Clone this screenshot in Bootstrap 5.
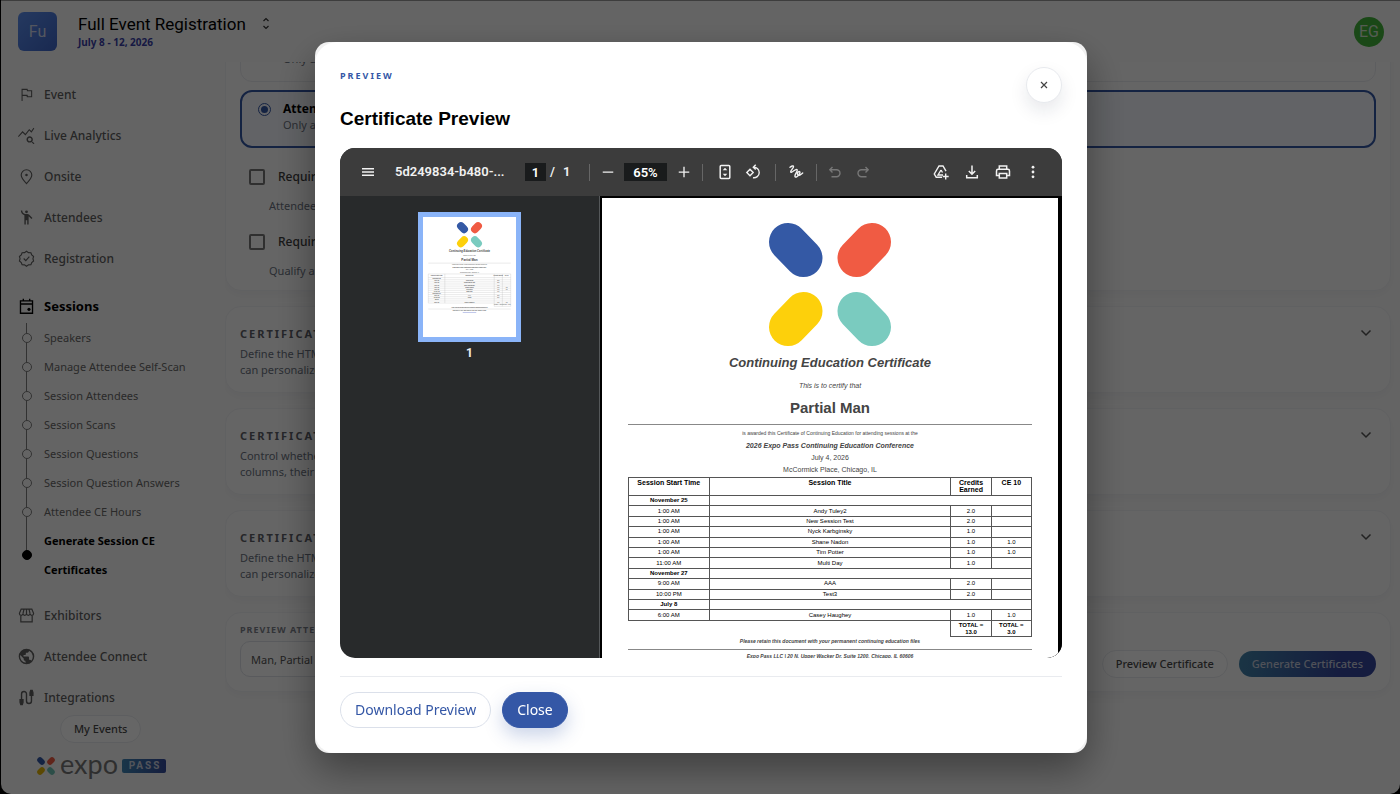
<!DOCTYPE html>
<html lang="en">
<head>
<meta charset="utf-8">
<meta name="viewport" content="width=device-width, initial-scale=1">
<title>Expo Pass - Generate Session CE Certificates</title>
<link href="https://cdn.jsdelivr.net/npm/bootstrap@5.3.0/dist/css/bootstrap.min.css" rel="stylesheet">
<style>
  :root { --navy: #3457a6; --line: #e9ebef; --muted-ink: #6b7280; }
  html, body { height: 100%; }
  body { background: #000; font-family: "Noto Sans", "Open Sans", sans-serif; font-size: 12px; line-height: 16px; color: #000; overflow: hidden; }
  button, input, select { font-family: inherit; }
  svg { display: block; flex: none; }
  .app-shell { height: 100vh; margin-left: 1px; background: #fbfbfb; border-top: 1px solid #999; border-radius: 0 0 10px 10px; overflow: hidden; }

  .app-header { height: 61px; padding: 0 16px 0 17px; }
  .event-tile { width: 39px; height: 39px; border-radius: 6px; background: linear-gradient(135deg, #5c8ff0, #3f66c8); color: #d0d8ee; font: 16px/39px Roboto, sans-serif; margin-right: 21px; }
  .event-name { font: 17px/20px Roboto, sans-serif; }
  .event-dates { font-size: 10px; line-height: 16px; font-weight: 700; color: #3a3fa8; }
  .avatar { width: 30px; height: 30px; border-radius: 50%; background: #43b53a; color: #d3e6d0; font: 16px/30px Roboto, sans-serif; border: 0; padding: 0; }

  .side { width: 224px; flex: none; }
  .side-nav { padding: 12px 0 0 17px; min-height: 0; flex: 1; overflow: hidden; }
  .side-link { height: 41px; gap: 9px; color: #5f5f5f; font-weight: 500; text-decoration: none; }
  .side-link.current { height: 44px; padding-top: 10px; color: #000; font-weight: 700; font-size: 13px; }
  .side-link svg { width: 17px; height: 17px; fill: currentColor; }
  .tree { margin: 0 0 11px; }
  .tree a { color: #696969; text-decoration: none; font-size: 11px; line-height: 29px; }
  .tree li { display: flex; gap: 9px; }
  .tree .rail { width: 17px; display: flex; align-items: center; justify-content: center; background: linear-gradient(#7d7d7d, #7d7d7d) center top / 1px 100% no-repeat; }
  .tree .rail::before { content: ""; width: 10px; height: 10px; border: 1px solid #7d7d7d; border-radius: 50%; background: #fbfbfb; }
  .tree .active .rail { background-size: 1px 50%; }
  .tree .active .rail::before { background: #000; border-color: #000; }
  .tree .active a { color: #000; font-weight: 700; width: 130px; }
  .side-foot { height: 79px; padding-left: 35px; }
  .pill { border: 1px solid var(--line); border-radius: 18px; background: #fff; color: #4a4a4a; font-size: 11px; font-weight: 500; line-height: 16px; padding: 5px 13px; }
  .brand-row { height: 22px; margin-top: 12px; }
  .brand-word { font: 27px/20px Lato, sans-serif; color: #777; padding-bottom: 4px; }
  .brand-pass { width: 44px; height: 14px; border-radius: 2px; background: linear-gradient(90deg, #3f86b5, #344a9c); color: #ccd3e2; font: 700 10px/14px Roboto, sans-serif; letter-spacing: 2px; padding-left: 2px; }

  .work { flex: 1; min-width: 0; overflow: hidden; padding: 0 9px 102px 0; gap: 15px; }
  .panel { flex: none; background: #fdfdfd; border: 1px solid #f1f2f5; border-radius: 16px; padding: 0 14px; box-shadow: 0 4px 12px rgba(20, 30, 60, .04); }
  .choice { display: block; border: 1px solid var(--line); border-radius: 12px; padding: 9px 18px 0; height: 58px; margin-bottom: 8px; }
  .choice.picked { border: 2px solid var(--navy); background: #f5f8ff; padding: 8px 17px 0; }
  .choice input { appearance: none; width: 11px; height: 11px; border: 1px solid var(--navy); border-radius: 50%; margin: 4px 13px 0 0; flex: none; }
  .choice.picked input { background: var(--navy); border: 2px solid #f5f8ff; outline: 1px solid var(--navy); }
  .choice strong { display: block; line-height: 17px; }
  .hint { font-size: 11px; line-height: 16px; color: var(--muted-ink); }
  .ticks { padding-top: 11px; }
  .tick-row { display: flex; align-items: center; height: 20px; gap: 13px; padding-left: 9px; color: #3c3c3c; font-weight: 500; }
  .tick-row input { appearance: none; width: 16px; height: 16px; margin: 0; border: 2px solid #777; border-radius: 2px; }
  .tick-hint { margin: 11px 0 18px 29px; }
  .tick-hint:last-child { margin-bottom: 11px; }
  .fold { height: 87px; padding-top: 18px; }
  .fold h2 { font-size: 11px; line-height: 17px; font-weight: 700; letter-spacing: 2px; color: #5d6068; margin: 0 0 4px; }
  .fold-toggle { border: 0; background: none; padding: 0 4px; height: 16px; color: #555; }
  .run-bar { height: 80px; }
  .run-bar .cap { font-size: 9px; line-height: 14px; letter-spacing: 1px; font-weight: 700; color: #7d828c; display: block; margin-bottom: 4px; }
  .run-bar select { width: 320px; height: 36px; border: 1px solid #dfe2e8; border-radius: 10px; font-size: 11px; color: #555; padding: 0 6px; background-color: #fff; }
  .go { border: 0; border-radius: 13px; height: 26px; padding: 0 13px; margin-left: 11px; font-size: 11px; font-weight: 500; color: #c5cbdc; background: linear-gradient(100deg, #4285ab, #35469d 75%); }

  .modal { background: rgba(0, 0, 0, .6); padding-left: 2px; }
  .modal-dialog { max-width: 772px; margin: 42px auto; }
  .modal-content { border: 0; border-radius: 14px; background: #f1f1f1; box-shadow: 0 16px 40px rgba(0, 0, 0, .4); }
  .sheet { background: #fff; border-radius: 22px 22px 20px 20px; padding: 25px; }
  .kicker { font-size: 9px; line-height: 18px; font-weight: 700; letter-spacing: 2px; color: var(--navy); }
  .modal-title { font: 700 19px/24px "Liberation Sans", Arial, sans-serif; margin-top: 22px; color: #000; }
  .round-close { width: 36px; height: 36px; border-radius: 50%; border: 1px solid #e8eaee; background: #fff; color: #444; box-shadow: 0 8px 18px rgba(20, 30, 60, .1); padding: 0; }
  .viewer { height: calc(100vh - 284px); min-height: 320px; margin-top: 17px; border-radius: 15px; overflow: hidden; background: #282a2b; font-family: Roboto, sans-serif; }
  .tools { height: 48px; flex: none; background: #3c3c3c; color: #f1f1f1; padding: 0 22px 0 21px; font-size: 13px; font-weight: 600; }
  .tools svg { width: 16px; height: 16px; fill: currentColor; }
  .tools button { border: 0; background: none; padding: 0; color: inherit; }
  .tools button:disabled { color: #777; }
  .tools input { border: 0; padding: 0; height: 18px; background: #191b1c; color: #fff; text-align: center; font-weight: 600; }
  .tools .file-name { width: 130px; margin-left: 20px; }
  .tools .page-no { width: 21px; }
  .tools .page-count { width: 30px; }
  .tools .zoom-level { width: 43px; margin: 0 11px 0 10px; }
  .tools .g10 { margin-left: 10px; }
  .tools .g12 { margin-left: 12px; }
  .tools .g14 { margin-left: 14px; }
  .tools-end { gap: 15px; }
  .sep { width: 1px; height: 17px; background: #666; }
  .thumbs { width: 260px; flex: none; border-right: 1px solid #55585a; padding-top: 16px; color: #eee; font-size: 12px; font-weight: 700; }
  .thumb { border: 5px solid #8ab4f8; background: #fff; width: 103px; height: 130px; padding: 0; margin-bottom: 3px; }
  .stage { flex: 1; min-width: 0; background: #000; padding: 2px 4px 0 2px; overflow: hidden; }

  .cert { height: 100%; background: #fff; color: #444; font-family: "Liberation Sans", Arial, sans-serif; text-align: center; padding: 25px 26px 0; overflow: hidden; }
  .cert > div { line-height: 12px; font-size: 7px; }
  .cert .c-title { font-size: 13px; line-height: 16px; font-weight: 700; font-style: italic; margin: 9px 0 9px; }
  .cert .c-name { font-size: 15px; line-height: 18px; font-weight: 700; margin: 7px 0; }
  .cert .c-small { font-size: 5px; line-height: 13px; margin-top: 2px; }
  .cert .c-note { font-size: 5px; font-weight: 700; font-style: italic; line-height: 8px; }
  .cert .rule + .c-note { margin-top: 2px; }
  .rule { height: 1px; background: #888; }
  .cert table { width: 100%; height: 160px; border-collapse: collapse; table-layout: fixed; color: #000; font-size: 6px; line-height: 7px; margin-top: 1px; }
  .cert th, .cert td { border: 1px solid #555; padding: 0; vertical-align: middle; }
  .cert thead th { font-size: 7px; height: 18px; vertical-align: top; padding-top: 1px; }
  .cert .totals td { height: 16px; font-weight: 700; }
  .cert .totals td:first-child { border: 0; border-top: 1px solid #555; }

  .sheet-foot { border-top: 1px solid var(--line); margin-top: 18px; padding-top: 15px; gap: 11px; }
  .sheet-foot .btn { font-size: 14px; line-height: 20px; padding: 7px 14px; border-radius: 18px; }
  .btn-save { border: 1px solid #dbe0ea; color: var(--navy); background: #fff; }
  .btn-shut { background: var(--navy); color: #fff; border: 1px solid var(--navy); box-shadow: 0 8px 18px rgba(52, 87, 166, .25); }
</style>
</head>
<body>
<div class="app-shell d-flex flex-column">
  <header class="app-header d-flex align-items-center flex-shrink-0">
    <div class="event-tile text-center">Fu</div>
    <div>
      <div class="d-flex align-items-center gap-2">
        <span class="event-name">Full Event Registration</span>
        <svg class="ms-1" width="16" height="16" viewBox="0 0 16 16" fill="none" stroke="#333" stroke-width="1.2"><path d="M5.500 5 8 2.500 10.500 5M5.500 10 8 12.500 10.500 10"/></svg>
      </div>
      <div class="event-dates">July 8 - 12, 2026</div>
    </div>
    <button class="avatar ms-auto" type="button">EG</button>
  </header>

  <div class="d-flex flex-grow-1" style="min-height:0">
    <aside class="side d-flex flex-column">
      <nav class="side-nav">
        <a class="side-link d-flex align-items-center" href="#"><svg viewBox="0 0 24 24"><path d="M5 21V4h8.500l.5 2h6v10h-7.500l-.5-2H6.500v7zM14 14.500h4.500v-7h-5.700l-.5-2H6.500v7h7z"/></svg>Event</a>
        <a class="side-link d-flex align-items-center" href="#"><svg viewBox="0 0 24 24"><path d="M19.900 20.400c.7-.7 1.100-1.700 1.100-2.900 0-2.500-2-4.500-4.500-4.500S12 15 12 17.500s2 4.500 4.500 4.500c.9 0 1.700-.2 2.400-.7l3.100 3 1.300-1.300zm-3.400-.4a2.500 2.500 0 1 1 0-5 2.500 2.500 0 0 1 0 5zM1 14l5.500-6 4 4L16 5l3 3 4-6-1.200-.8-3 4.500L15.800 2.700l-5.400 6.900-4-4L0 13z"/></svg>Live Analytics</a>
        <a class="side-link d-flex align-items-center" href="#"><svg viewBox="0 0 24 24" style="fill:none" stroke="currentColor" stroke-width="1.600"><path d="M12 22c-4.500-4.600-7.500-8.200-7.500-12a7.500 7.500 0 0 1 15 0c0 3.800-3 7.400-7.500 12z"/><circle cx="12" cy="10" r="1" fill="currentColor"/></svg>Onsite</a>
        <a class="side-link d-flex align-items-center" href="#"><svg viewBox="0 0 24 24"><circle cx="12" cy="4" r="2"/><path d="M15.900 8.100A3.600 3.600 0 0 0 13 7h-2C8.200 7 6 4.800 6 2H4c0 3.200 2.100 5.800 5 6.700V22h2v-6h2v6h2V10.100l4 3.900 1.400-1.400z"/></svg>Attendees</a>
        <a class="side-link d-flex align-items-center" href="#"><svg viewBox="0 0 24 24" style="fill:none" stroke="currentColor" stroke-width="1.600"><path d="m12 1.800 2.800 1.900 3.400.1 1.200 3.200 2.600 2.100-.9 3.200.9 3.300-2.600 2.100-1.200 3.200-3.400.1-2.800 1.900-2.800-1.900-3.400-.1-1.200-3.200L2 15.600l.9-3.300L2 9.100 4.600 7l1.200-3.200 3.400-.1zM8 12l3 3 5-5.500"/></svg>Registration</a>
        <a class="side-link current d-flex align-items-center" href="#"><svg viewBox="0 0 24 24" style="fill:none" stroke="currentColor" stroke-width="1.900"><path d="M3.500 4h17v17.500h-17zM3.500 8.500h17M7.500 1v3M16.500 1v3"/><circle cx="15.500" cy="16" r="2.200" fill="currentColor" stroke="none"/></svg>Sessions</a>
        <ul class="tree list-unstyled">
          <li><span class="rail"></span><a href="#">Speakers</a></li>
          <li><span class="rail"></span><a href="#">Manage Attendee Self-Scan</a></li>
          <li><span class="rail"></span><a href="#">Session Attendees</a></li>
          <li><span class="rail"></span><a href="#">Session Scans</a></li>
          <li><span class="rail"></span><a href="#">Session Questions</a></li>
          <li><span class="rail"></span><a href="#">Session Question Answers</a></li>
          <li><span class="rail"></span><a href="#">Attendee CE Hours</a></li>
          <li class="active"><span class="rail"></span><a href="#">Generate Session CE Certificates</a></li>
        </ul>
        <a class="side-link d-flex align-items-center" href="#"><svg viewBox="0 0 24 24" style="fill:none" stroke="currentColor" stroke-width="1.700"><path d="M4 11.500V21h16v-9.500M4.500 3h15L22 9c0 3.500-4.500 3.500-5 .5-.5 3-4.500 3-5 0-.5 3-4.500 3-5 0C6.500 12.500 2 12.500 2 9zM8.500 3 7 9.500M12 3v6.500M15.500 3 17 9.500"/></svg>Exhibitors</a>
        <a class="side-link d-flex align-items-center" href="#"><svg viewBox="0 0 24 24"><path d="M12 1a11 11 0 1 0 0 22 11 11 0 0 0 0-22zm-1 19.900A9 9 0 0 1 3.200 10L8 14.800v1.100c0 1.200 1 2.200 2.200 2.200zM18.700 18a2.200 2.200 0 0 0-2.100-1.500h-1.100v-3.300c0-.6-.5-1.100-1.100-1.100H7.800V9.900H10c.6 0 1.100-.5 1.100-1.100V6.600h2.200c1.200 0 2.200-1 2.200-2.200V4A9 9 0 0 1 18.700 18z"/></svg>Attendee Connect</a>
        <a class="side-link d-flex align-items-center" href="#"><svg viewBox="0 0 24 24" style="fill:none" stroke="currentColor" stroke-width="2"><path d="M5 18V7a3.500 3.500 0 0 1 7 0v10a3.500 3.500 0 0 0 7 0V7"/><path fill="currentColor" d="M3 15h4v4l-1 3H4l-1-3zM17 9V5l1-3h2l1 3v4z"/></svg>Integrations</a>
      </nav>
      <div class="side-foot">
        <button class="pill ms-4" type="button">My Events</button>
        <div class="brand-row d-flex align-items-center">
          <svg width="20" height="20" viewBox="0 0 20 20" fill="none" stroke-width="5.600" stroke-linecap="round"><path stroke="#3457a6" d="m4 4 2 2"/><path stroke="#ef5a42" d="m16 4-2 2"/><path stroke="#e3b505" d="m4 16 2-2"/><path stroke="#6fc4b4" d="m16 16-2-2"/></svg>
          <span class="brand-word ms-1">expo</span><span class="brand-pass text-center ms-1">PASS</span>
        </div>
      </div>
    </aside>

    <main class="work d-flex flex-column justify-content-end">
      <section class="panel">
        <label class="choice d-flex"><input type="radio" name="scope"><span><strong>All</strong><span class="hint">Only all</span></span></label>
        <label class="choice picked d-flex"><input type="radio" name="scope" checked><span><strong>Attended</strong><span class="hint">Only attended</span></span></label>
        <div class="ticks">
          <label class="tick-row"><input type="checkbox">Require survey</label>
          <div class="hint tick-hint">Attendees complete it first</div>
          <label class="tick-row"><input type="checkbox">Require check-in</label>
          <div class="hint tick-hint">Qualify attendees on arrival</div>
        </div>
      </section>
      <section class="panel fold d-flex justify-content-between">
        <div><h2>CERTIFICATE</h2><div class="hint">Define the HTML used so that you<br>can personalize each page.</div></div>
        <button class="fold-toggle" type="button" aria-label="Expand"><svg width="12" height="16" viewBox="0 0 12 16" fill="none" stroke="currentColor" stroke-width="1.500"><path d="m1.500 5.500 4.500 4.500 4.500-4.500"/></svg></button>
      </section>
      <section class="panel fold d-flex justify-content-between">
        <div><h2>CERTIFICATE</h2><div class="hint">Control whether the table shows<br>columns, their order and names.</div></div>
        <button class="fold-toggle" type="button" aria-label="Expand"><svg width="12" height="16" viewBox="0 0 12 16" fill="none" stroke="currentColor" stroke-width="1.500"><path d="m1.500 5.500 4.500 4.500 4.500-4.500"/></svg></button>
      </section>
      <section class="panel fold d-flex justify-content-between">
        <div><h2>CERTIFICATE</h2><div class="hint">Define the HTML used so that you<br>can personalize each email.</div></div>
        <button class="fold-toggle" type="button" aria-label="Expand"><svg width="12" height="16" viewBox="0 0 12 16" fill="none" stroke="currentColor" stroke-width="1.500"><path d="m1.500 5.500 4.500 4.500 4.500-4.500"/></svg></button>
      </section>
      <section class="panel run-bar d-flex align-items-center justify-content-between">
        <div class="pb-1"><label class="cap" for="who">PREVIEW ATTENDEE</label><select id="who"><option>Man, Partial</option></select></div>
        <div class="d-flex align-items-center pt-4"><button class="pill" type="button">Preview Certificate</button><button class="go" type="button">Generate Certificates</button></div>
      </section>
    </main>
  </div>
</div>

<div class="modal show d-block" role="dialog" aria-modal="true" aria-labelledby="dlg-title" tabindex="-1">
  <div class="modal-dialog">
    <div class="modal-content">
      <div class="sheet">
        <div class="d-flex justify-content-between align-items-start">
          <div>
            <div class="kicker">PREVIEW</div>
            <h1 class="modal-title" id="dlg-title">Certificate Preview</h1>
          </div>
          <button class="round-close d-flex align-items-center justify-content-center" type="button" aria-label="Close preview"><svg width="8" height="8" viewBox="0 0 8 8" stroke="currentColor" stroke-width="1.200"><path d="m1 1 6 6M7 1 1 7"/></svg></button>
        </div>

        <div class="viewer d-flex flex-column">
          <div class="tools d-flex align-items-center">
            <button type="button" aria-label="Menu"><svg style="width:14px" viewBox="0 0 14 16"><path d="M1 4h12v1.500H1zm0 3.300h12v1.500H1zm0 3.300h12v1.500H1z"/></svg></button>
            <span class="file-name">5d249834-b480-...</span>
            <input class="page-no" value="1" aria-label="Page"><span class="ms-1">/</span><span class="page-count ms-1 ps-1">1</span>
            <span class="sep"></span>
            <button class="g12" type="button" aria-label="Zoom out"><svg viewBox="0 0 16 16" style="width:12px"><path d="M1 7.200h14v1.800H1z"/></svg></button>
            <input class="zoom-level" value="65%" aria-label="Zoom level">
            <button type="button" aria-label="Zoom in"><svg viewBox="0 0 16 16" style="width:12px"><path d="M1 7.200h6.100V1h1.800v6.200H15V9H8.900v6H7.100V9H1z"/></svg></button>
            <span class="sep g12"></span>
            <button class="g14" type="button" aria-label="Fit to page"><svg viewBox="0 0 16 16" style="fill:none" stroke="currentColor" stroke-width="1.500"><rect x="3.200" y="1.500" width="9.600" height="13" rx="1"/><path fill="currentColor" stroke="none" d="m8 3.800 2.300 2.500H5.700zm0 8.400 2.300-2.500H5.700z"/></svg></button>
            <button class="g12" type="button" aria-label="Rotate"><svg viewBox="0 0 16 16" style="fill:none" stroke="currentColor" stroke-width="1.400"><path d="M5 5.300 8.200 8.500 5 11.700 1.800 8.500zM8.500 3.200a5.300 5.300 0 1 1-.5 10.500M10.700.8 8.300 3.200l2.400 2.400"/></svg></button>
            <span class="sep g14"></span>
            <button class="g12" type="button" aria-label="Draw"><svg viewBox="0 0 16 16" style="fill:none" stroke="currentColor" stroke-width="1.400" stroke-linecap="round"><path d="M2 3.200C3.500 2 5.300 1.300 5.500 2.600 5.700 4 2.300 6.500 2.700 8 3.200 9.800 7.500 4.500 9 5.500c1.500 1.200-3.300 5.500-1.900 7.200 1.700 1.700 5.700-3.500 4.600-5-1.200-1.200-3 2-2 3.200 1 1.100 3.200-.2 5-1.900"/></svg></button>
            <span class="sep g12"></span>
            <button type="button" class="g10" disabled aria-label="Undo"><svg viewBox="0 0 16 16" style="fill:none" stroke="currentColor" stroke-width="1.400"><path d="M5.500 3 2.800 5.800 5.500 8.500M3 5.800h6.500a3.500 3.500 0 0 1 0 7H4.500"/></svg></button>
            <button type="button" class="g12" disabled aria-label="Redo"><svg viewBox="0 0 16 16" style="fill:none" stroke="currentColor" stroke-width="1.400"><path d="m10.500 3 2.700 2.800-2.700 2.700M13 5.800H6.500a3.500 3.500 0 0 0 0 7h5"/></svg></button>
            <div class="tools-end ms-auto d-flex">
              <button type="button" aria-label="Save to Drive"><svg viewBox="0 0 16 16" style="fill:none" stroke="currentColor" stroke-width="1.400"><path d="M9 13.200H3.200L1.300 10 6 2h4l3 5.200M8 6l-3 5h5M8 6l1.500 2.500M12.700 9.500v6M9.700 12.500h6"/></svg></button>
              <button type="button" aria-label="Download"><svg viewBox="0 0 16 16" style="fill:none" stroke="currentColor" stroke-width="1.500"><path d="M8 1.500v8.700M4.800 7 8 10.200 11.200 7M2.700 11v2.700h10.600V11"/></svg></button>
              <button type="button" aria-label="Print"><svg viewBox="0 0 16 16" style="fill:none" stroke="currentColor" stroke-width="1.500"><path d="M4.300 5V2h7.400v3M4 11.500H1.500V7c0-1 .6-1.700 1.600-1.700h9.800c1 0 1.600.7 1.600 1.700v4.500H12M4.300 9.500h7.400V14H4.300z"/></svg></button>
              <button type="button" aria-label="More"><svg style="width:14px" viewBox="0 0 14 16"><circle cx="7" cy="3.200" r="1.400"/><circle cx="7" cy="8" r="1.400"/><circle cx="7" cy="12.800" r="1.400"/></svg></button>
            </div>
          </div>

          <div class="d-flex flex-grow-1" style="min-height:0">
            <div class="thumbs d-flex flex-column align-items-center">
              <button class="thumb" type="button" aria-label="Page 1"><svg id="mini" width="93" height="120" viewBox="0 0 456 588" font-family="Liberation Sans" text-anchor="middle" fill="#444"></svg></button>
              <span>1</span>
            </div>
            <div class="stage">
              <article class="cert">
                <svg class="mx-auto" id="mark" width="122" height="123" viewBox="0 0 122 123" fill="none" stroke-width="38" stroke-linecap="round"><path stroke="#3459a5" d="m19 19 15.500 16"/><path stroke="#f05b43" d="M103 19 87.500 35"/><path stroke="#fdd00b" d="m19 104 15.500-16"/><path stroke="#7acbbf" d="M103 104 87.500 88"/></svg>
                <div class="c-title">Continuing Education Certificate</div>
                <div><i>This is to certify that</i></div>
                <div class="c-name">Partial Man</div>
                <div class="rule"></div>
                <div class="c-small">is awarded this Certificate of Continuing Education for attending sessions at the</div>
                <div><b><i>2026 Expo Pass Continuing Education Conference</i></b></div>
                <div>July 4, 2026</div>
                <div>McCormick Place, Chicago, IL</div>
                <table>
                  <colgroup><col style="width:20%"><col style="width:60%"><col style="width:10%"><col style="width:10%"></colgroup>
                  <thead><tr><th>Session Start Time</th><th>Session Title</th><th>Credits Earned</th><th>CE 10</th></tr></thead>
                  <tbody>
                    <tr><th>November 25</th><td colspan="3"></td></tr>
                    <tr><td>1:00 AM</td><td>Andy Tuley2</td><td>2.0</td><td></td></tr>
                    <tr><td>1:00 AM</td><td>New Session Test</td><td>2.0</td><td></td></tr>
                    <tr><td>1:00 AM</td><td>Nyck Karbginsky</td><td>1.0</td><td></td></tr>
                    <tr><td>1:00 AM</td><td>Shane Nadon</td><td>1.0</td><td>1.0</td></tr>
                    <tr><td>1:00 AM</td><td>Tim Potter</td><td>1.0</td><td>1.0</td></tr>
                    <tr><td>11:00 AM</td><td>Multi Day</td><td>1.0</td><td></td></tr>
                    <tr><th>November 27</th><td colspan="3"></td></tr>
                    <tr><td>9:00 AM</td><td>AAA</td><td>2.0</td><td></td></tr>
                    <tr><td>10:00 PM</td><td>Test3</td><td>2.0</td><td></td></tr>
                    <tr><th>July 8</th><td colspan="3"></td></tr>
                    <tr><td>6:00 AM</td><td>Casey Haughey</td><td>1.0</td><td>1.0</td></tr>
                    <tr class="totals"><td colspan="2"></td><td>TOTAL =<br>13.0</td><td>TOTAL =<br>3.0</td></tr>
                  </tbody>
                </table>
                <div class="c-note">Please retain this document with your permanent continuing education files</div>
                <div class="rule mt-1"></div>
                <div class="c-note">Expo Pass LLC | 20 N. Upper Wacker Dr. Suite 1200, Chicago, IL 60606</div>
              </article>
            </div>
          </div>
        </div>

        <div class="sheet-foot d-flex">
          <button class="btn btn-save" type="button">Download Preview</button>
          <button class="btn btn-shut" type="button">Close</button>
        </div>
      </div>
    </div>
  </div>
</div>

<script src="https://cdn.jsdelivr.net/npm/bootstrap@5.3.0/dist/js/bootstrap.bundle.min.js"></script>
<script>
  // Page thumbnail: a small drawing of the certificate, filled from its table.
  const say = (x, y, size, text, extra = '') => `<text x="${x}" y="${y}" font-size="${size}" ${extra}>${text}</text>`;
  const bold = 'font-weight="700"';
  let art = `<g transform="translate(167 25)" fill="none" stroke-width="38" stroke-linecap="round">${document.getElementById('mark').innerHTML}</g>`;
  art += say(228, 170, 13, 'Continuing Education Certificate', bold + ' font-style="italic"')
    + say(228, 190, 7, 'This is to certify that') + say(228, 215, 15, 'Partial Man', bold)
    + say(228, 237, 5, 'is awarded this Certificate of Continuing Education for attending sessions at the')
    + say(228, 250, 7, '2026 Expo Pass Continuing Education Conference', bold)
    + say(228, 262, 7, 'July 4, 2026') + say(228, 274, 7, 'McCormick Place, Chicago, IL')
    + '<path stroke="#999" d="M26 226h404M26 451h404M26 279v143M107 279v143M349 279v159M389 279v159M430 279v159M349 438h81"/>';
  const xs = [67, 228, 369, 410];
  document.querySelectorAll('.cert tr').forEach((row, r) => {
    const y = r ? 297 + (r - 1) * 10.4 : 279;
    art += `<path stroke="#999" d="M26 ${y}h404"/>`;
    [...row.cells].forEach((cell, c) => {
      const col = row.className ? c + 1 : c;
      if (cell.textContent) art += say(xs[col], y + 8, 6.5, cell.innerHTML.replace('<br>', ' '), bold);
    });
  });
  art += say(228, 445, 5, 'Please retain this document with your permanent continuing education files', bold)
    + say(228, 460, 5, 'Expo Pass LLC | 20 N. Upper Wacker Dr. Suite 1200, Chicago, IL 60606', bold)
    + '<path stroke="#67c" stroke-width="2" d="M195 468h66"/>';
  document.getElementById('mini').innerHTML = art;
</script>
</body>
</html>
